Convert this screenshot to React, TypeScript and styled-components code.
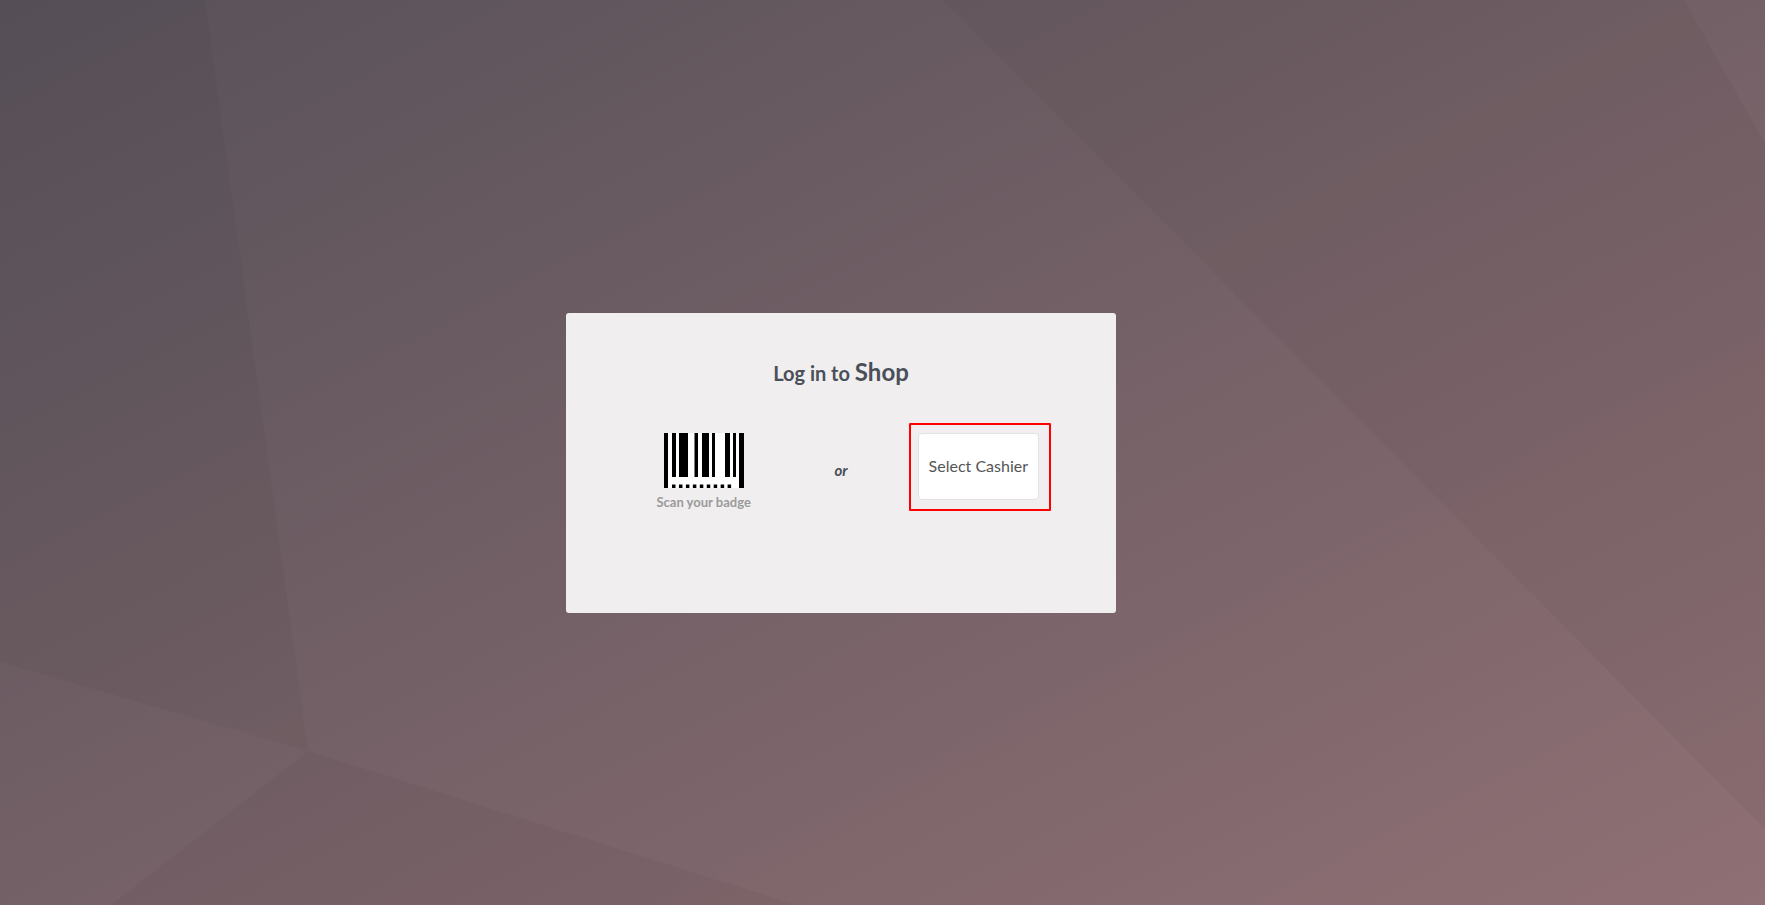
import React from "react";
import styled, { createGlobalStyle } from "styled-components";

const GlobalStyle = createGlobalStyle`
  *, *::before, *::after { box-sizing: border-box; }
  body {
    margin: 0;
    font-family: Lato, "Open Sans", sans-serif;
    font-size: 16px;
    color: #4a4f59;
  }
`;

const Screen = styled.main`
  position: relative;
  display: flex;
  align-items: center;
  justify-content: center;
  min-height: 100vh;
  padding: 21px 83px 0 0;
  overflow: hidden;
  background: linear-gradient(to right bottom, #585159, #8f7074);
`;

const Backdrop = styled.svg`
  position: absolute;
  inset: 0;
  width: 100%;
  height: 100%;
`;

const LoginCard = styled.section`
  position: relative;
  width: 100%;
  max-width: 550px;
  min-height: 300px;
  padding: 43px 0;
  border-radius: 3px;
  background: #f0eeee;
`;

const Title = styled.h1`
  margin: 0;
  font-size: 20px;
  line-height: 34px;
  font-weight: 700;
  text-align: center;
`;

const ShopName = styled.span`
  font-size: 24px;
  line-height: 24px;
`;

const Options = styled.div`
  display: grid;
  grid-template-columns: repeat(3, 1fr);
  align-items: start;
  padding: 43px 69px 0;
`;

const BadgeOption = styled.div`
  display: flex;
  flex-direction: column;
  align-items: center;
  gap: 4px;
`;

const BadgeLabel = styled.span`
  font-size: 13px;
  line-height: 20px;
  font-weight: 700;
  color: #9b9b9b;
`;

const Separator = styled.em`
  padding-top: 27px;
  font-size: 15px;
  line-height: 20px;
  font-weight: 700;
  text-align: center;
`;

const CashierOption = styled.div`
  position: relative;
  justify-self: center;

  &::after {
    content: "";
    position: absolute;
    inset: -10px -12px -11px -9px;
    border: 2px solid #ff0000;
    border-radius: 1px;
    pointer-events: none;
  }
`;

const CashierButton = styled.button`
  display: block;
  width: 121px;
  height: 67px;
  padding: 0 0 2px;
  border: 1px solid #e2e2e6;
  border-radius: 4px;
  background: #ffffff;
  color: #555555;
  font-family: inherit;
  font-size: 16px;
  line-height: 24px;
  cursor: pointer;
`;

const bars = [
  { x: 0, width: 4, height: 55 },
  { x: 8, width: 4, height: 44 },
  { x: 15, width: 9, height: 44 },
  { x: 30.5, width: 3.5, height: 44 },
  { x: 38, width: 7, height: 44 },
  { x: 48, width: 3, height: 44 },
  { x: 61, width: 5, height: 44 },
  { x: 69, width: 3, height: 44 },
  { x: 75, width: 5, height: 55 },
];

const Barcode = () => (
  <svg width="80" height="55" viewBox="0 0 80 55" aria-hidden="true">
    <rect width="80" height="55" fill="#fff" />
    {bars.map((bar) => (
      <rect key={bar.x} x={bar.x} width={bar.width} height={bar.height} />
    ))}
    {Array.from({ length: 9 }, (_, i) => (
      <rect key={i} x={8 + i * 6.95} y="51.5" width="3.5" height="3.5" />
    ))}
  </svg>
);

export default function App() {
  return (
    <>
      <GlobalStyle />
      <Screen>
        <Backdrop viewBox="0 0 1765 905" preserveAspectRatio="none" aria-hidden="true">
          <g fill="#000" fillOpacity="0.03">
            <polygon points="0,0 205,0 308,751 0,662" />
            <polygon points="308,751 797,905 111,905" />
            <polygon points="943,0 1684,0 1765,143 1765,829" />
          </g>
        </Backdrop>
        <LoginCard>
          <Title>
            Log in to <ShopName>Shop</ShopName>
          </Title>
          <Options>
            <BadgeOption>
              <Barcode />
              <BadgeLabel>Scan your badge</BadgeLabel>
            </BadgeOption>
            <Separator>or</Separator>
            <CashierOption>
              <CashierButton type="button">Select Cashier</CashierButton>
            </CashierOption>
          </Options>
        </LoginCard>
      </Screen>
    </>
  );
}
